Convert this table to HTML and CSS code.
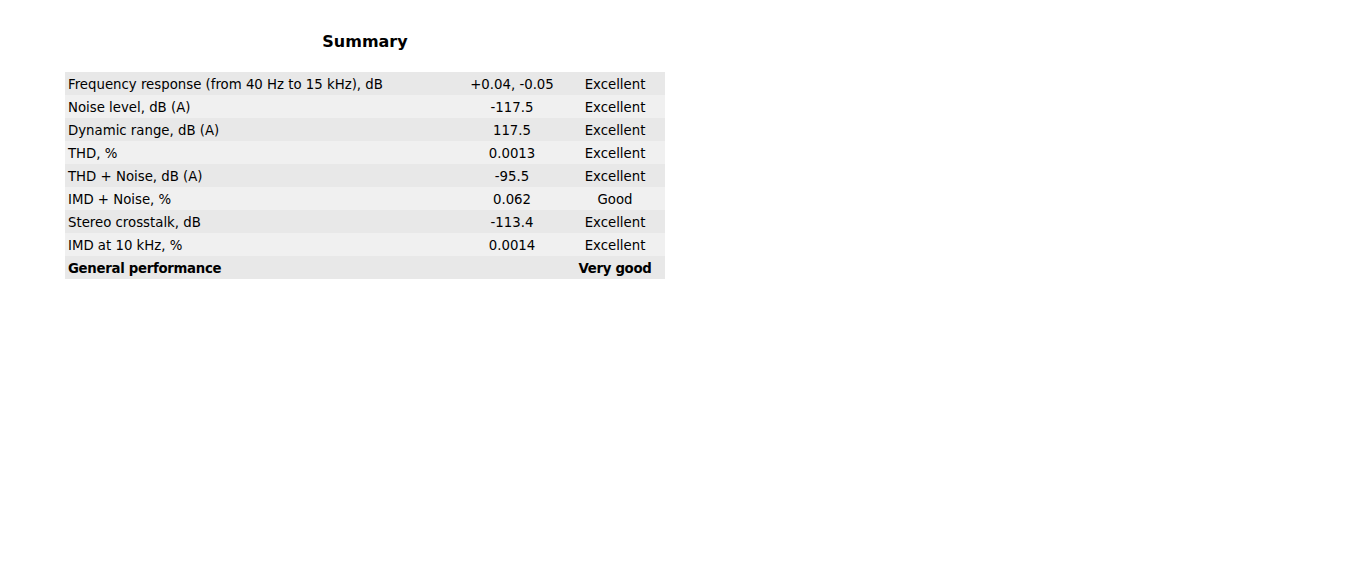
FILE: index.html
```html
<!DOCTYPE html>
<html>
<head>
<meta charset="utf-8">
<link rel="stylesheet" href="styles.css">
</head>
<body>
<div class="page">
  <div class="summary">
    <h2 class="title">Summary</h2>
    <table class="results">
      <colgroup>
        <col class="c-label">
        <col class="c-value">
        <col class="c-grade">
      </colgroup>
      <tr><td class="label">Frequency response (from 40 Hz to 15 kHz), dB</td><td class="value">+0.04, -0.05</td><td class="grade">Excellent</td></tr>
      <tr><td class="label">Noise level, dB (A)</td><td class="value">-117.5</td><td class="grade">Excellent</td></tr>
      <tr><td class="label">Dynamic range, dB (A)</td><td class="value">117.5</td><td class="grade">Excellent</td></tr>
      <tr><td class="label">THD, %</td><td class="value">0.0013</td><td class="grade">Excellent</td></tr>
      <tr><td class="label">THD + Noise, dB (A)</td><td class="value">-95.5</td><td class="grade">Excellent</td></tr>
      <tr><td class="label">IMD + Noise, %</td><td class="value">0.062</td><td class="grade">Good</td></tr>
      <tr><td class="label">Stereo crosstalk, dB</td><td class="value">-113.4</td><td class="grade">Excellent</td></tr>
      <tr><td class="label">IMD at 10 kHz, %</td><td class="value">0.0014</td><td class="grade">Excellent</td></tr>
      <tr class="total"><td class="label">General performance</td><td class="value"></td><td class="grade">Very good</td></tr>
    </table>
  </div>
</div>
</body>
</html>
```
FILE: styles.css
```css
html, body {
  margin: 0;
  padding: 0;
  background: #ffffff;
}
.page {
  padding: 32px 0 0 65px;
  font-family: "DejaVu Sans", Verdana, sans-serif;
  color: #000000;
}
.summary {
  width: 600px;
}
.title {
  margin: 0 0 20px 0;
  font-size: 16px;
  line-height: 20px;
  font-weight: bold;
  text-align: center;
}
.results {
  width: 600px;
  border-collapse: collapse;
  border-spacing: 0;
  table-layout: fixed;
  font-size: 13.3px;
}
.c-label { width: 394px; }
.c-value { width: 106px; }
.c-grade { width: 100px; }
.results td {
  height: 23px;
  padding: 2px 3px 0 3px;
  line-height: 21px;
  white-space: nowrap;
  box-sizing: border-box;
}
.results tr:nth-child(odd) { background: #e8e8e8; }
.results tr:nth-child(even) { background: #f0f0f0; }
.value, .grade { text-align: center; }
.total td {
  font-weight: bold;
  letter-spacing: -0.3px;
}
```
